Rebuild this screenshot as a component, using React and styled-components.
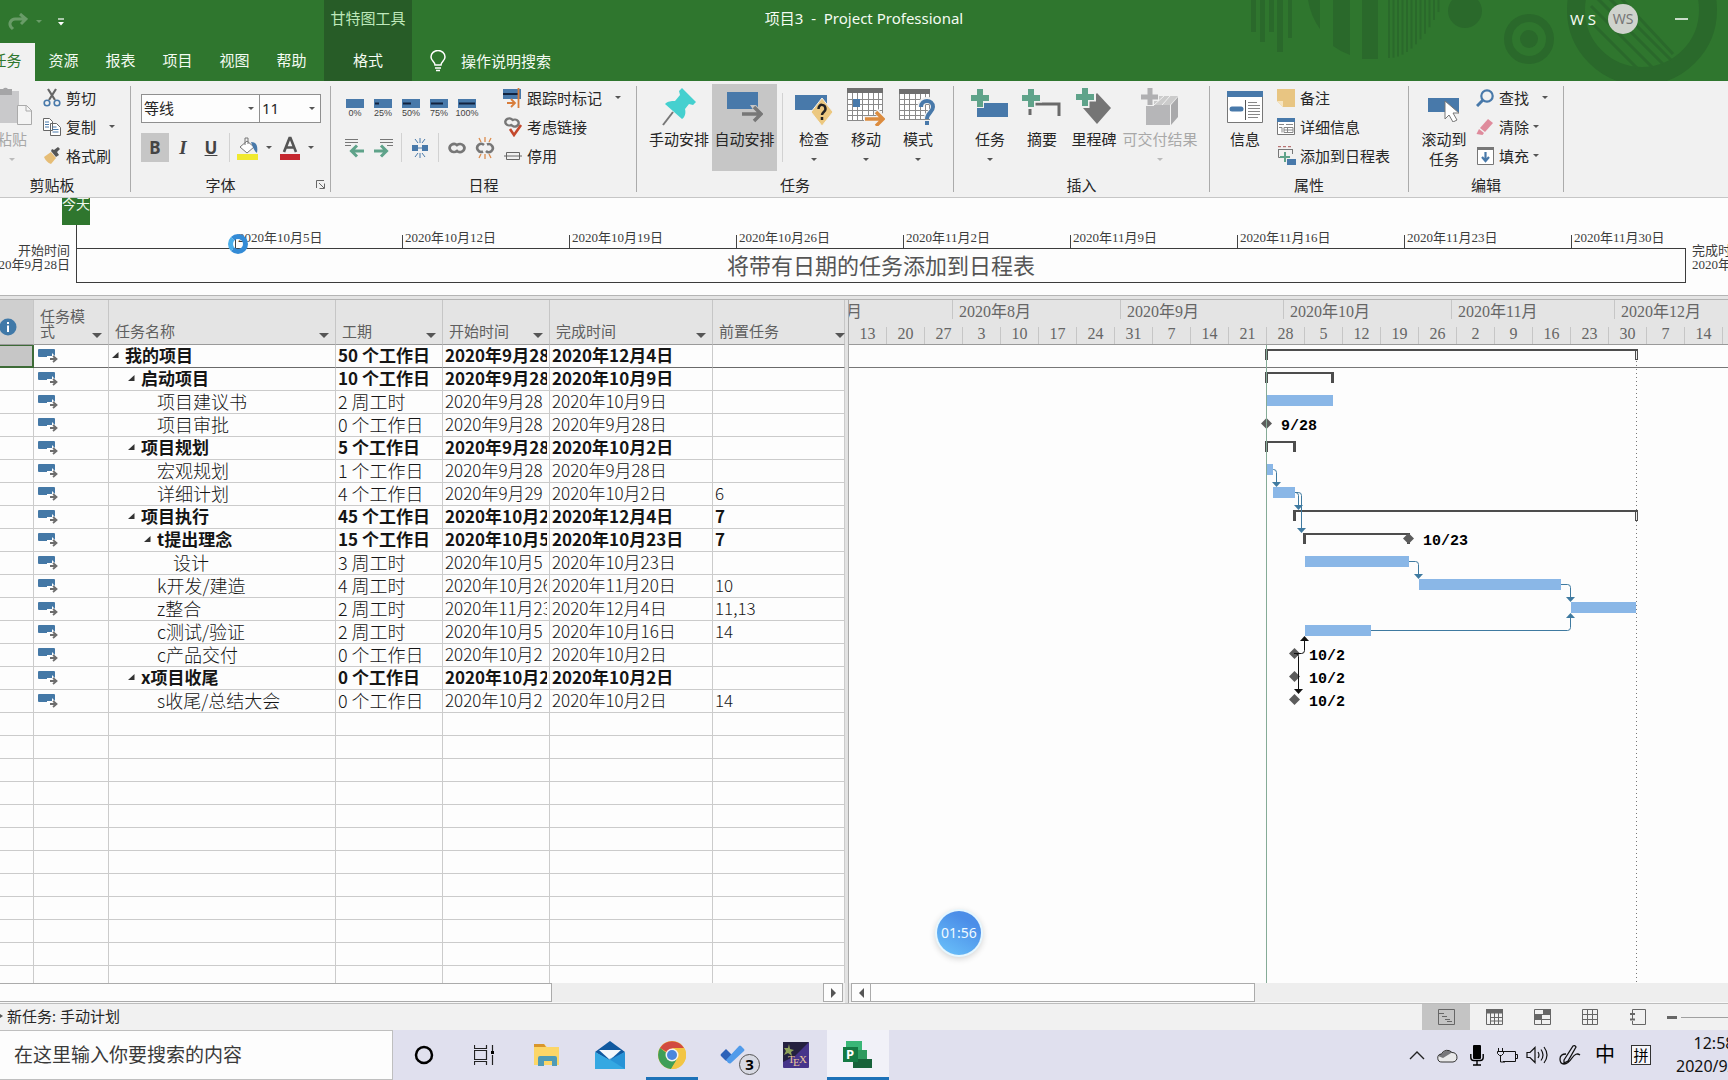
import React from "react";
import styled, { createGlobalStyle, css } from "styled-components";

const UI = `"Noto Sans", "Noto Sans CJK SC", sans-serif`;
const GRID = `"Noto Sans CJK SC", sans-serif`;
const SONG = `"Liberation Serif", "Noto Sans CJK SC", serif`;

const c = {
  green: "#2f762e",
  greenDark: "#275c27",
  pattern: "#2a692b",
  ribbon: "#f1f1f1",
  line: "#c6c6c6",
  head: "#e4e4e4",
  blue: "#4879aa",
  bar: "#8ab7e7",
  teal: "#5fa38a",
};

const GlobalStyle = createGlobalStyle`
  * { box-sizing: border-box; }
  html, body { margin: 0; height: 100%; overflow: hidden; }
  body { font-family: ${UI}; font-size: 15px; color: #262626; background: #fdfdfd; }
  button, input, select { font: inherit; color: inherit; margin: 0; padding: 0; border: 0; background: none; border-radius: 0; }
  svg { display: block; flex: none; }
`;

const Shell = styled.div`
  height: 100vh;
  display: flex;
  flex-direction: column;
  overflow: hidden;
  position: relative;
`;

/* ---------- title bar and tabs ---------- */
const Header = styled.header`
  position: relative;
  flex: none;
  background: ${c.green};
  color: #f4fbf2;
`;
const Pattern = styled.svg`
  position: absolute;
  right: 0;
  top: 0;
`;
const TitleRow = styled.div`
  position: relative;
  display: grid;
  grid-template-columns: 1fr auto 1fr;
  height: 43px;
`;
const TitleLeft = styled.div`
  display: flex;
`;
const QuickAccess = styled.div`
  width: 324px;
  display: flex;
  align-items: center;
  gap: 8px;
  padding-left: 8px;
`;
const QuickButton = styled.button`
  display: flex;
  opacity: ${(p) => (p.$dim ? 0.28 : 1)};
  margin-left: ${(p) => p.$gap || 0}px;
`;
const ContextLabel = styled.div`
  width: 88px;
  height: 43px;
  line-height: 36px;
  text-align: center;
  background: ${c.greenDark};
  color: #bfe8bb;
`;
const Title = styled.h1`
  margin: 0;
  font-size: 15px;
  font-weight: 400;
  line-height: 36px;
  white-space: pre;
`;
const Account = styled.div`
  display: flex;
  justify-content: flex-end;
  align-items: center;
  height: 38px;
  padding-right: 40px;
`;
const Avatar = styled.span`
  width: 30px;
  height: 30px;
  margin: 0 37px 0 12px;
  border-radius: 50%;
  background: #cfd3cd;
  color: #777;
  font-size: 14px;
  line-height: 30px;
  text-align: center;
`;
const Tabs = styled.nav`
  position: relative;
  display: flex;
  height: 38px;
  margin-left: -22px;
`;
const Tab = styled.button`
  width: 57px;
  padding-bottom: 5px;
  ${(p) => p.$active && css`background: ${c.ribbon}; color: ${c.green};`}
`;
const FormatTab = styled(Tab)`
  width: 88px;
  margin-left: 4px;
  background: ${c.greenDark};
`;
const TellMe = styled.button`
  display: flex;
  align-items: center;
  gap: 15px;
  margin-left: 18px;
  padding-bottom: 3px;
`;

/* ---------- ribbon ---------- */
const Ribbon = styled.section`
  flex: none;
  display: flex;
  height: 117px;
  background: ${c.ribbon};
  border-bottom: 1px solid ${c.line};
`;
const Group = styled.div`
  width: ${(p) => p.$w}px;
  flex: none;
  display: flex;
  flex-direction: column;
  padding-top: 3px;
  &:first-child { margin-left: -26px; }
`;
const GroupBody = styled.div`
  display: flex;
  height: 87px;
  padding-left: ${(p) => p.$pad || 10}px;
`;
const GroupFoot = styled.div`
  display: flex;
  height: 26px;
  line-height: 28px;
`;
const GroupName = styled.span`
  flex: 1;
  text-align: center;
`;
const Launcher = styled.button`
  width: 20px;
  display: flex;
  align-items: center;
  padding-left: 6px;
`;
const Rule = styled.span`
  flex: none;
  width: 1px;
  margin: ${(p) => p.$m || "5px 0"};
  background: ${(p) => (p.$soft ? "#d2d2d2" : "#ababab")};
`;
const Big = styled.button`
  width: ${(p) => p.$w}px;
  height: 87px;
  flex: none;
  display: flex;
  flex-direction: column;
  align-items: center;
  line-height: 20px;
  white-space: nowrap;
  background: ${(p) => (p.$on ? "#c6c6c6" : "transparent")};
  color: ${(p) => (p.$off ? "#a8a8a8" : "inherit")};
`;
const BigIcon = styled.span`
  height: 45px;
  display: flex;
  align-items: center;
`;
const CaretSlot = styled.span`
  height: 20px;
  display: flex;
  align-items: center;
`;
const SmallCol = styled.div`
  display: flex;
  flex-direction: column;
`;
const Small = styled.button`
  height: 29px;
  display: flex;
  align-items: center;
  gap: 3px;
  padding: 0 5px 2px;
  white-space: nowrap;
`;
const IconBox = styled.span`
  width: 22px;
  display: flex;
  justify-content: center;
`;
const SmallCaret = styled.span`
  display: flex;
  margin-left: ${(p) => (p.$near ? 1 : 10)}px;
`;
const Tools = styled.div`
  display: flex;
  flex-direction: column;
  gap: 10px;
  padding-top: 10px;
  width: ${(p) => p.$w}px;
`;
const ToolRow = styled.div`
  display: flex;
  height: 29px;
`;
const Combo = styled.label`
  position: relative;
  width: ${(p) => p.$w}px;
  height: 29px;
  border: 1px solid #8f8f8f;
  background: #fdfdfd;
  & + & { margin-left: -1px; }
  select { width: 100%; height: 100%; padding: 0 0 2px 2px; appearance: none; outline: 0; }
  svg { position: absolute; right: 5px; top: 12px; pointer-events: none; }
`;
const Tool = styled.button`
  width: 28px;
  height: 29px;
  flex: none;
  display: flex;
  flex-direction: column;
  align-items: center;
  justify-content: center;
  color: #444;
  font-size: ${(p) => (p.$pct ? 9 : 17)}px;
  font-family: ${(p) => (p.$pct ? `"Liberation Sans", sans-serif` : "inherit")};
  line-height: ${(p) => (p.$pct ? 10 : 20)}px;
  background: ${(p) => (p.$on ? "#c6c6c6" : "transparent")};
  i { font-family: "Liberation Serif", serif; font-size: 19px; }
`;
const ToolCaret = styled.button`
  width: 14px;
  display: flex;
  align-items: center;
  justify-content: center;
`;

/* ---------- timeline ---------- */
const Timeline = styled.section`
  position: relative;
  flex: none;
  display: flex;
  height: 97px;
  background: #fdfdfd;
  font: 13px/14px ${SONG};
  color: #3c3c3c;
`;
const TimelineEnd = styled.div`
  flex: none;
  width: ${(p) => p.$w}px;
  padding: 46px 6px 0;
  display: flex;
  flex-direction: column;
  align-items: ${(p) => (p.$start ? "flex-end" : "flex-start")};
  overflow: hidden;
  white-space: nowrap;
`;
const TimelineMain = styled.div`
  flex: 1;
`;
const Ticks = styled.div`
  display: grid;
  grid-template-columns: 159fr repeat(8, 167fr) 115fr;
  height: 50px;
  padding-top: 32px;
`;
const Tick = styled.span`
  position: relative;
  padding-left: 3px;
  line-height: 15px;
  white-space: nowrap;
  &:not(:first-child)::before {
    content: "";
    position: absolute;
    left: 0;
    bottom: 0;
    width: 1px;
    height: 13px;
    background: #444;
  }
`;
const Track = styled.div`
  height: 35px;
  border: 1px solid #3c3c3c;
  text-align: center;
  font: 22px/31px ${GRID};
  color: #555;
`;
const Today = styled.div`
  position: absolute;
  left: 62px;
  top: 0;
  width: 28px;
  height: 27px;
  background: ${c.green};
  color: #eef8ec;
  font: 14px/11px ${GRID};
  &::after {
    content: "";
    position: absolute;
    left: 14px;
    top: 27px;
    width: 1px;
    height: 23px;
    background: #3c3c3c;
  }
`;
const Busy = styled.div`
  position: absolute;
  left: 228px;
  top: 36px;
  width: 20px;
  height: 20px;
  border-radius: 50%;
  border: 5px solid #338bd6;
  border-left-color: #4aaeea;
`;
const HSplit = styled.div`
  flex: none;
  height: 5px;
  background: ${c.head};
  border: solid #b4b4b4;
  border-width: 1px 0;
`;

/* ---------- panes ---------- */
const Panes = styled.main`
  flex: 1;
  min-height: 0;
  display: grid;
  grid-template-columns: 845px 4px 1fr;
  grid-template-rows: 100%;
  border-bottom: 1px solid #bdbdbd;
`;
const Pane = styled.section`
  min-width: 0;
  display: flex;
  flex-direction: column;
`;
const Clip = styled.div`
  flex: 1;
  min-height: 0;
  overflow: hidden;
`;
const VSplit = styled.div`
  background: #e2e2e2;
  border-right: 1px solid #aaa;
`;
const Sheet = styled.table`
  width: 845px;
  table-layout: fixed;
  border-collapse: separate;
  border-spacing: 0;
  font: 17px/20px ${GRID};
  color: #1d1d1d;
`;
const Th = styled.th`
  height: 45px;
  padding: 0 6px 6px;
  vertical-align: bottom;
  text-align: left;
  font: 15px/15px ${GRID};
  color: #5f5f5f;
  background: ${(p) => (p.$corner ? "#cfcfcf" : c.head)};
  border-right: 1px solid ${c.line};
  border-bottom: 1px solid #9a9a9a;
`;
const ThBody = styled.div`
  display: flex;
  align-items: flex-end;
  justify-content: space-between;
  margin-right: ${(p) => (p.$edge ? -7 : 0)}px;
`;
const Row = styled.tr`
  color: #151515;
  font-weight: ${(p) => (p.$bold ? 700 : 300)};
  td { border-bottom-color: ${(p) => (p.$selected ? "#6a6a6a" : "#cbcbcb")}; }
  td:first-child {
    ${(p) => p.$selected && css`
      background: #c6c6c6;
      border-color: #3d6b37;
      box-shadow: inset -1px -1px #3d6b37, inset 0 1px #3d6b37;
    `}
  }
`;
const Td = styled.td`
  height: 23px;
  padding: 0 2px 2px;
  overflow: hidden;
  white-space: nowrap;
  font-size: ${(p) => (p.$wide ? 18 : 17)}px;
  border-right: 1px solid #cbcbcb;
  border-bottom: 1px solid #cbcbcb;
`;
const ModeCell = styled.div`
  padding: 1px 0 0 2px;
`;
const NameCell = styled.div`
  display: flex;
  align-items: center;
  height: 20px;
  padding-left: ${(p) => 1 + 16 * (p.$level - 1)}px;
`;
const Fold = styled.span`
  width: 13px;
  flex: none;
`;
const Clipped = styled.div`
  height: 20px;
  overflow: hidden;
`;
const InfoMark = styled.span`
  margin: 0 0 2px -7px;
`;
const ScrollBar = styled.div`
  flex: none;
  display: flex;
  justify-content: ${(p) => (p.$right ? "flex-start" : "space-between")};
  height: 20px;
  padding: 0 2px;
  background: #eee;
  border-bottom: 1px solid #f8f8f8;
`;
const Thumb = styled.div`
  width: ${(p) => p.$w};
  margin-left: ${(p) => (p.$flush ? -3 : -1)}px;
  background: #fdfdfd;
  border: 1px solid #ababab;
`;
const Arrow = styled.button`
  width: 20px;
  display: flex;
  align-items: center;
  justify-content: center;
  background: #fdfdfd;
  border: 1px solid #ababab;
`;
const Scale = styled.div`
  flex: none;
  height: 45px;
  overflow: hidden;
  background: ${c.head};
  border-bottom: 1px solid #9a9a9a;
  font: 16px/18px ${SONG};
  color: #666;
`;
const ScaleRow = styled.div`
  display: flex;
  height: ${(p) => p.$h}px;
  margin-bottom: ${(p) => (p.$gap ? 8 : 0)}px;
`;
const Month = styled.span`
  flex: none;
  width: ${(p) => p.$w}px;
  padding-left: 6px;
  line-height: 23px;
  white-space: nowrap;
  border-right: 1px solid ${c.line};
  &:first-child { text-indent: -9px; }
`;
const Week = styled.span`
  flex: none;
  width: 38px;
  line-height: 13px;
  text-align: center;
  border-right: 1px solid ${c.line};
`;
const Chart = styled.svg`
  width: 100%;
  height: 100%;
  background: #fdfdfd;
  font: bold 15px "Liberation Mono", monospace;
`;
const Timer = styled.div`
  position: absolute;
  left: 937px;
  bottom: 125px;
  width: 44px;
  height: 44px;
  border-radius: 50%;
  background: linear-gradient(30deg, #6cc4fb, #4b8ee8 75%);
  box-shadow: 0 0 0 2px #e6f7ff, 0 2px 6px 2px rgba(0, 0, 0, 0.16);
  color: #f0faff;
  font-size: 14px;
  line-height: 44px;
  text-align: center;
`;

/* ---------- status bar ---------- */
const Status = styled.footer`
  flex: none;
  display: flex;
  height: 26px;
  overflow: hidden;
  background: ${c.ribbon};
  line-height: 23px;
`;
const StatusText = styled.span`
  flex: 1;
  display: flex;
  align-items: center;
  gap: 3px;
  padding-bottom: 2px;
`;
const ViewButton = styled.button`
  width: 48px;
  display: flex;
  align-items: center;
  justify-content: center;
  background: ${(p) => (p.$on ? "#c4c4c4" : "transparent")};
`;
const ZoomBox = styled.div`
  width: 66px;
  flex: none;
  display: flex;
  align-items: center;
  gap: 4px;
  padding-left: 5px;
  overflow: hidden;
  input {
    appearance: none;
    flex: none;
    width: 140px;
    height: 1px;
    background: #a0a0a0;
    &::-webkit-slider-thumb { appearance: none; width: 6px; height: 14px; background: #666; }
  }
`;

/* ---------- taskbar ---------- */
const Taskbar = styled.footer`
  flex: none;
  display: flex;
  height: 50px;
  overflow: hidden;
  background: #e0e0ee;
`;
const Search = styled.input`
  width: 393px;
  padding-left: 14px;
  font-size: 19px;
  background: #fdfdfd;
  border: solid #bfbfbf;
  border-width: 1px 1px 1px 0;
  &::placeholder { color: #3a3a3a; opacity: 1; }
`;
const TaskButton = styled.button`
  position: relative;
  width: 62px;
  display: flex;
  align-items: center;
  justify-content: center;
  background: ${(p) => (p.$on ? "#f1f1f8" : "transparent")};
  &::after {
    content: "";
    position: absolute;
    left: ${(p) => (p.$on ? 0 : 5)}px;
    right: ${(p) => (p.$on ? 0 : 5)}px;
    bottom: 0;
    height: 3px;
    background: ${(p) => (p.$run || p.$on ? "#1d72b8" : "transparent")};
  }
`;
const Badge = styled.span`
  position: absolute;
  left: 36px;
  top: 24px;
  width: 21px;
  height: 21px;
  border: 1px solid #555;
  border-radius: 50%;
  background: #d7d9e2;
  color: #000;
  font-size: 15px;
  font-weight: 700;
  line-height: 18px;
`;
const Tray = styled.div`
  flex: 1;
  display: flex;
  align-items: center;
  justify-content: flex-end;
`;
const TrayButton = styled.button`
  width: ${(p) => p.$w || 30}px;
  display: flex;
  align-items: center;
  justify-content: center;
  color: #000;
  font-size: 20px;
  line-height: 24px;
`;
const Ime = styled.span`
  width: 20px;
  height: 20px;
  border: 1px solid #333;
  background: #f6f6fa;
  font-size: 15px;
  line-height: 18px;
  text-align: center;
`;
const Clock = styled.div`
  flex: none;
  width: 76px;
  margin: 0 -24px 0 16px;
  font-size: 16px;
  line-height: 23px;
  text-align: center;
  color: #111;
`;

/* ---------- icons ---------- */
const Caret = ({ color = "#555", w = 8 }) => (
  <svg width={w} height={w / 2} viewBox="0 0 8 4"><path d="M0 0h8L4 4z" fill={color} /></svg>
);
const S = ({ w, h, children }) => (
  <svg width={w} height={h} viewBox={`0 0 ${w} ${h}`} fill="none">{children}</svg>
);
const Calendar = ({ w, h, top, cols, rows }) => (
  <g stroke="#8a8a8a">
    <rect x=".5" y=".5" width={w - 1} height={h - 1} fill="#fff" />
    {Array.from({ length: cols - 1 }, (_, i) => <path key={"c" + i} d={`M${Math.round(((i + 1) * w) / cols) + 0.5} ${top}V${h}`} />)}
    {Array.from({ length: rows - 1 }, (_, i) => <path key={"r" + i} d={`M0 ${top + Math.round(((i + 1) * (h - top)) / rows) + 0.5}H${w}`} />)}
    <path d={`M0 0h${w}v${top}H0z`} fill="#6f6f6f" stroke="none" />
  </g>
);
const I = {
  redo: <S w={20} h={18}><path d="M17 6H7a5 5 0 0 0-4 8l2 2M12 1l6 5-5 5" stroke="#fff" strokeWidth="3" /></S>,
  more: <S w={6} h={8}><path d="M0 1h6" stroke="#fff" strokeWidth="1.2" /><path d="M0 4h6L3 7.500z" fill="#fff" /></S>,
  bulb: <S w={16} h={22}><path d="M5 15c0-3-4-4-4-8a7 6.500 0 0 1 14 0c0 4-4 5-4 8zM5 18h6M6 20.500h4" stroke="#fff" strokeWidth="1.500" /></S>,
  paste: <S w={44} h={40}><path d="M1 4h28v32H1z" fill="#c9c9cb" /><path d="M9 2h4a3 3 0 0 1 5 0h4v6H9z" fill="#a5a5a7" /><path d="M27.500 18.500h9l5 5v14h-14z" fill="#f4f4f4" stroke="#aaa" /><path d="M36 18v6h6" stroke="#aaa" /></S>,
  cut: <S w={18} h={19}><path d="M5 1l7 11M13 1L6 12" stroke="#666" strokeWidth="2.200" /><circle cx="4" cy="15" r="2.800" stroke={c.blue} strokeWidth="1.600" /><circle cx="14" cy="15" r="2.800" stroke={c.blue} strokeWidth="1.600" /></S>,
  copy: <S w={18} h={18}><path d="M.5.5h6l3 3v9h-9zM7.500 5.500h6l4 4v8h-10z" fill="#fff" stroke="#666" /><path d="M2 4h4M2 6.500h4M2 9h4M9.500 9h4M9.500 11.500h6M9.500 14h6" stroke={c.blue} /></S>,
  brush: <S w={18} h={18}><path d="M1 10l7-5 5 6-5 6c-3-1-6-4-7-7z" fill="#e6bd76" /><path d="M8 4l5 6 3-2-2-3 3-3-2-2-4 3-2-1z" fill="#555" /></S>,
  bucket: <S w={22} h={24}><path d="M10 5l7 6-7 6-7-6z" fill="#fff" stroke="#777" /><path d="M8 9V2h3v6" stroke="#777" /><path d="M14 6c6 0 7 5 6 11-3-2-4-6-6-11z" fill={c.blue} /><path d="M0 18h21v6H0z" fill="#f0e92f" /></S>,
  fontA: <S w={20} h={24}><path d="M4 16L9.500 2h1L16 16M6 11.500h8" stroke="#555" strokeWidth="2.600" /><path d="M0 18h20v6H0z" fill="#c5272f" /></S>,
  launcher: <S w={9} h={9}><path d="M.5 8V.5H8M3 3l5 5M8.500 3.500v5h-5" stroke="#666" /></S>,
  outdent: <S w={20} h={20}><path d="M0 1.500h13M0 4.500h13M0 7.500h6" stroke="#777" /><path d="M19 13H7M12 7.500L6.500 13l5.500 5.500" stroke={c.teal} strokeWidth="3" /></S>,
  indent: <S w={20} h={20}><path d="M7 1.500h13M7 4.500h13M14 7.500h6" stroke="#777" /><path d="M1 13h12M8 7.500l5.500 5.500L8 18.500" stroke={c.teal} strokeWidth="3" /></S>,
  split: <S w={18} h={20}><path d="M1 7h6v6H1zM11 7h6v6h-6z" fill={c.blue} /><path d="M9 0v5M9 15v5M4 1l3 4M14 1l-3 4M4 19l3-4M14 19l-3-4M7 10h4" stroke={c.blue} /></S>,
  link: <S w={20} h={14}><path d="M10 10a4.500 4 0 1 1 1-5M10 4a4.500 4 0 1 1-1 5" stroke="#777" strokeWidth="2.800" /></S>,
  unlink: <S w={20} h={22}><path d="M8 14.500a4 4 0 1 1 1-6.500M12 7.500a4 4 0 1 1-1 6.500" stroke="#777" strokeWidth="2.600" /><path d="M10 0v5M10 17v5M4 1l2 4M16 1l-2 4M4 21l2-4M16 21l-2-4" stroke="#dd8c4d" strokeWidth="1.300" /></S>,
  mark: <S w={20} h={20}><path d="M0 1h18v10H0z" fill={c.blue} /><path d="M0 6h15" stroke="#12233f" strokeWidth="2" /><path d="M15.500 0v20M4 15h8M8 11l4 4-4 4" stroke="#d87d3b" strokeWidth="1.800" /></S>,
  respect: <S w={20} h={20}><path d="M9 7.500a4 3.500 0 1 1 1-4M9 3.500a4 3.500 0 1 1-1 4" stroke="#777" strokeWidth="2.400" /><path d="M7 12l4 6 7-10" stroke="#c4482c" strokeWidth="2.600" /></S>,
  inactive: <S w={18} h={10}><path d="M2.500 1.500h13v7h-13zM0 5h18" stroke="#666" /></S>,
  pin: <S w={36} h={38}><path d="M12 24L2 37" stroke="#777" strokeWidth="2" /><path d="M21 0l14 14-3 3-4-1-4 5c1 4 0 8-3 10L4 16c3-3 6-3 10-3l5-6-1-4z" fill="#45d0cf" /></S>,
  auto: <S w={36} h={32}><path d="M0 1h31v17H0z" fill={c.blue} /><path d="M13 20h14l-4-6h6l8 9-7 9h-6l4-6H13z" fill="#c6c6c6" /><path d="M15 23h18M27 16l7 7-7 7" stroke="#777" strokeWidth="3.500" /></S>,
  check: <S w={38} h={38}><path d="M0 7h32v15H0z" fill={c.blue} /><path d="M27 10l11 14-11 14-11-14z" fill="#ecc880" stroke="#f1f1f1" /><path d="M23.500 21c0-6 7-5 7 0 0 3-3.500 3-3.500 6M27 29v3" stroke="#222" strokeWidth="2.500" /></S>,
  move: <S w={38} h={38}><Calendar w={36} h={33} top={5} cols={7} rows={5} /><path d="M6 11h7v8H6z" fill={c.blue} /><path d="M17 31h18M29 23l8 8-8 8" stroke="#f1f1f1" strokeWidth="6" /><path d="M18 31h17M29 24l7 7-7 7" stroke="#dc8c3f" strokeWidth="3.500" /></S>,
  mode: <S w={38} h={36}><Calendar w={31} h={31} top={5} cols={6} rows={5} /><path d="M22 18c0-9 13-9 13 0 0 6-7 6-7 12M28 32v4" stroke="#f1f1f1" strokeWidth="7" /><path d="M22 18c0-8 12-8 12 0 0 5-6 6-6 12M28 32v4" stroke={c.blue} strokeWidth="4" /></S>,
  task: <S w={38} h={36}><path d="M6 14h31v14H6z" fill={c.blue} /><path d="M9 0v19M0 9h19" stroke="#f1f1f1" strokeWidth="8" /><path d="M9 0v18M0 9h18" stroke={c.teal} strokeWidth="6" /></S>,
  summary: <S w={40} h={36}><path d="M8 26V15h29v12" stroke="#6a6a6a" strokeWidth="3" /><path d="M9 0v20M0 9h20" stroke="#f1f1f1" strokeWidth="9" /><path d="M9 0v18M0 9h18" stroke={c.teal} strokeWidth="6" /></S>,
  milestone: <S w={36} h={38}><path d="M21 5l14 15-14 16L7 20z" fill="#757575" /><path d="M9 0v20M0 9h20" stroke="#f1f1f1" strokeWidth="9" /><path d="M9 0v18M0 9h18" stroke={c.teal} strokeWidth="6" /></S>,
  deliver: <S w={38} h={38}><path d="M5 17l9-9h23l-8 9z" fill="#cbcbcb" /><path d="M5 17h24v20H5z" fill="#b6b6b8" /><path d="M30 17l7-8v20l-7 8z" fill="#a9a9ab" /><path d="M13 17l10-9M21 17l8-9" stroke="#f1f1f1" /><path d="M9 0v18M0 9h18" stroke="#f1f1f1" strokeWidth="8" /><path d="M9 0v17M0 9h17" stroke="#b0b0b2" strokeWidth="5" /></S>,
  info: <S w={36} h={32}><path d="M.5.5h35v31H.5z" fill="#fff" stroke="#777" /><path d="M0 0h36v6H0z" fill={c.blue} /><path d="M5 18h9" stroke={c.blue} strokeWidth="5" strokeLinecap="round" /><path d="M18.500 9v20" stroke="#555" /><path d="M21 11.500h9M21 14.500h12M21 17.500h12M21 20.500h12M21 23.500h12M21 26.500h10" stroke="#888" /></S>,
  note: <S w={18} h={18}><path d="M0 0h18v18H6l-6-6z" fill="#e8c582" /><path d="M0 12h6v6z" fill="#f6e5c2" /></S>,
  detail: <S w={18} h={17}><path d="M.5.5h17v16H.5z" fill="#fff" stroke="#777" /><path d="M0 0h18v4H0z" fill={c.blue} /><path d="M2 6.500h5M9 6.500h7M2 9.500h3v5M7 9.500h9v5H7zM10.500 9v6M7 12h9" stroke="#888" /></S>,
  addTl: <S w={19} h={19}><path d="M1.500 3v8.500H5M15.500 3v5M1 3.500h15" stroke="#777" /><path d="M1 .7h3M6 .7h3M11 .7h3" stroke="#a55" /><path d="M8 6v10M3 11h10" stroke={c.teal} strokeWidth="2" /><path d="M10 13h9v6h-9z" fill={c.blue} /></S>,
  scrollTo: <S w={34} h={30}><path d="M1 6h31v14H1z" fill={c.blue} /><path d="M18 9v18l4-4 4 7 4-2-4-7h6z" fill="#fff" stroke="#777" /></S>,
  find: <S w={18} h={18}><circle cx="11" cy="7" r="5.700" stroke={c.blue} strokeWidth="2.200" /><path d="M7 11l-6 6" stroke={c.blue} strokeWidth="3" /></S>,
  erase: <S w={18} h={16}><path d="M12 0l5 4-8 9-5-4z" fill="#df8b9c" /><path d="M3 10l5 4-1.500 2-6-1z" fill="#df8b9c" /></S>,
  fill: <S w={17} h={18}><path d="M.5.5h16v17H.5z" fill="#fff" stroke="#777" /><path d="M0 0h17v3H0z" fill="#777" /><path d="M8.500 5v8M5 10l3.500 4 3.500-4" stroke={c.blue} strokeWidth="2.200" /></S>,
  row: <S w={20} h={14}><path d="M1 0h15q1 0 1 1v7H1q-1 0-1-1V1q0-1 1-1z" fill="#4478a6" /><path d="M9 7h5V4l6 6-5 4v-3H9z" fill="#fff" /><path d="M12 10h6M15 7l3.500 3L15 13" stroke="#6d6d6d" strokeWidth="1.800" /></S>,
  fold: <S w={7} h={6}><path d="M6.500 0v6H0z" fill="#333" /></S>,
  i: <S w={18} h={18}><circle cx="9" cy="9" r="8.500" fill="#4079a8" /><path d="M9 7.500V14M9 4v2" stroke="#fff" strokeWidth="2" /></S>,
  left: <S w={5} h={10}><path d="M5 0v10L0 5z" fill="#555" /></S>,
  right: <S w={5} h={10}><path d="M0 0v10l5-5z" fill="#555" /></S>,
  vGantt: <S w={17} h={16}><path d="M.5.5h16v15H.5zM0 4.500h6M4 7.500h5M7 10.500h5M9 12.500h5" stroke="#666" /></S>,
  vUsage: <S w={17} h={16}><path d="M.5.5h16v15H.5zM4.500 4v12M8.500 4v12M12.500 4v12M4 8.500h12M4 12h12" stroke="#666" /><path d="M0 0h17v4.500H0z" fill="#666" /></S>,
  vTeam: <S w={17} h={16}><path d="M.5.5h16v15H.5zM0 5.500h17M0 10.500h17M7.500 10v6" stroke="#666" /><path d="M9 0h8v5H9zM0 5h8v5H0z" fill="#666" /></S>,
  vSheet: <S w={16} h={16}><path d="M.5.5h15v15H.5zM5.500 0v16M10.500 0v16M0 5.500h16M0 10.500h16" stroke="#666" /></S>,
  vReport: <S w={16} h={16}><path d="M2.500 4V.5h13v15h-13V12M2.500 6v4" stroke="#666" /><path d="M0 5h5M0 10.500h5" stroke="#666" strokeWidth="2" /></S>,
  cortana: <S w={20} h={20}><circle cx="10" cy="10" r="8" stroke="#000" strokeWidth="2.500" /></S>,
  taskview: <S w={24} h={20}><path d="M.5 0v3.500h12V0M.5 20v-3.500h12V20M.5 5.500h12v9H.5zM18.500 0v6M18.500 10v10" stroke="#222" strokeWidth="1.200" /><path d="M17 6h3v3h-3z" fill="#000" /></S>,
  explorer: <S w={28} h={25}><path d="M0 1h10l3 3h12v18H0z" fill="#fcd667" /><path d="M0 1h10l2 3H0z" fill="#d9962c" /><path d="M4 23v-8q0-2 2-2h15q2 0 2 2v8h-5v-5h-8v5z" fill="#4f9bb6" /></S>,
  mail: <S w={30} h={28}><path d="M0 11L15 0l15 11-15 9z" fill="#11599f" /><path d="M4 9h22l-11 10z" fill="#f4f7fb" /><path d="M0 11l15 8 15-8v17H0z" fill="#35a8e2" /><path d="M30 11v17L14 18z" fill="#1f86cf" opacity=".6" /></S>,
  chrome: <S w={28} h={28}><circle cx="14" cy="14" r="14" fill="#f2c544" /><path d="M14 14L2 7a14 14 0 0 1 24 0z" fill="#d24b41" /><path d="M2 7a14 14 0 0 0 11 21l6-10-5-2z" fill="#3f9e57" /><path d="M14 7h12.200a14 14 0 0 1-13 21l7-11z" fill="#f2c544" /><circle cx="14" cy="14" r="6.500" fill="#f3f3f3" /><circle cx="14" cy="14" r="5" fill="#4a86dd" /></S>,
  todo: <S w={30} h={26}><path d="M2 12l5-5 6 6-5 6q-1 0-2-1l-4-4q-1-1 0-2z" fill="#2d62b8" /><path d="M7 18L20 4q1-1 2 0l3 3q1 1 0 2L12 21q-2 2-5-3z" fill="#519bea" /></S>,
  chevron: <S w={16} h={10}><path d="M1 9l7-7 7 7" stroke="#222" strokeWidth="1.400" /></S>,
  cloud: <S w={21} h={15}><path d="M5 14a4 4 0 0 1-.5-8A6 5.500 0 0 1 15 4.500a5 4.800 0 0 1 1 9.500z" fill="#e9e9ea" /><path d="M1 8q2-3 4-2A6 5.500 0 0 1 15 4.500L6 10z" fill="#77777b" /><path d="M5 14a4 4 0 0 1-.5-8A6 5.500 0 0 1 15 4.500a5 4.800 0 0 1 1 9.500z" stroke="#333" /></S>,
  mic: <S w={14} h={21}><rect x="3" y="0" width="8" height="14" rx="1" fill="#000" /><path d="M.8 9v3.500q0 3 3 3h6.400q3 0 3-3V9M7 15v5M3 20h8" stroke="#000" strokeWidth="1.400" /></S>,
  battery: <S w={21} h={16}><path d="M6 4.500h12.500v10H6M19 7.500h1.500v4H19M1.500 1v3M5.500 1v3M.5 4.500h6v2l-2 2h-2l-2-2zM3.500 8v7H8" stroke="#111" /></S>,
  sound: <S w={22} h={18}><path d="M1 6.500h3l5-5v15l-5-5H1zM12 6q2 3 0 6M15 3.500q4 5.500 0 11M18 1q6 8 0 16" stroke="#111" strokeWidth="1.200" /></S>,
  pen: <S w={22} h={20}><path d="M5 15L14 1q2-1 3 1L9 16l-4 2zM7 9q-6 0-6 5t4 5 8-6 8-3" stroke="#111" strokeWidth="1.300" /></S>,
};

const letter = { fontSize: 11, fontFamily: "Liberation Serif", fill: "#e9c59a" };
const TexIcon = () => (
  <S w={26} h={26}>
    <rect width="26" height="26" rx="1" fill="#46348a" />
    <path d="M0 0h26L12 14 0 20z" fill="#24203f" />
    <path d="M6 2l1 5 4 1-3 2 1 4-4-3-4 2 2-4-2-3 4 0z" fill="#8fa35a" />
    <text x="5" y="21" {...letter}>T</text>
    <text x="10" y="24" {...letter}>E</text>
    <text x="16" y="21" {...letter}>X</text>
  </S>
);
const ProjectIcon = () => (
  <S w={30} h={28}>
    <path d="M3 0h16v9H3z" fill="#3ab677" />
    <path d="M14 9h10v10H14z" fill="#2f9a5f" />
    <path d="M10 18h19v9H10z" fill="#17623a" />
    <path d="M3 9h12v11H3z" fill="#1f8a52" />
    <path d="M0 6h15v15H0z" fill="#147943" />
    <text x="3" y="18" fontSize="13" fontWeight="700" fill="#fff">P</text>
  </S>
);

/* ---------- data ---------- */
const cols = [34, 75, 227, 107, 107, 163, 132];
const tasks = [
  [1, "我的项目", "50 个工作日", "2020年9月28", "2020年12月4日", "", true],
  [2, "启动项目", "10 个工作日", "2020年9月28", "2020年10月9日", "", true],
  [3, "项目建议书", "2 周工时", "2020年9月28", "2020年10月9日", ""],
  [3, "项目审批", "0 个工作日", "2020年9月28", "2020年9月28日", ""],
  [2, "项目规划", "5 个工作日", "2020年9月28", "2020年10月2日", "", true],
  [3, "宏观规划", "1 个工作日", "2020年9月28", "2020年9月28日", ""],
  [3, "详细计划", "4 个工作日", "2020年9月29", "2020年10月2日", "6"],
  [2, "项目执行", "45 个工作日", "2020年10月2", "2020年12月4日", "7", true],
  [3, "t提出理念", "15 个工作日", "2020年10月5", "2020年10月23日", "7", true],
  [4, "设计", "3 周工时", "2020年10月5", "2020年10月23日", ""],
  [3, "k开发/建造", "4 周工时", "2020年10月26", "2020年11月20日", "10"],
  [3, "z整合", "2 周工时", "2020年11月23", "2020年12月4日", "11,13"],
  [3, "c测试/验证", "2 周工时", "2020年10月5", "2020年10月16日", "14"],
  [3, "c产品交付", "0 个工作日", "2020年10月2", "2020年10月2日", ""],
  [2, "x项目收尾", "0 个工作日", "2020年10月2", "2020年10月2日", "", true],
  [3, "s收尾/总结大会", "0 个工作日", "2020年10月2", "2020年10月2日", "14"],
];
const months = [["月", 104], ["2020年8月", 168], ["2020年9月", 163], ["2020年10月", 168], ["2020年11月", 163], ["2020年12月", 168]];
const weeks = [13, 20, 27, 3, 10, 17, 24, 31, 7, 14, 21, 28, 5, 12, 19, 26, 2, 9, 16, 23, 30, 7, 14];
const ROW = 23;
const summaries = [[0, 416, 789], [1, 416, 485], [4, 416, 447], [7, 444, 789], [8, 454, 561]];
const bars = [[2, 417, 484], [5, 417, 424], [6, 424, 446], [9, 456, 560], [10, 570, 712], [11, 722, 787], [12, 456, 522]];
const milestones = [[3, 417, "9/28"], [8, 559, "10/23"], [13, 445, "10/2"], [14, 445, "10/2"], [15, 445, "10/2"]];
const mid = (r) => r * ROW + 9.5;
const links = [
  [424, 5, 427.5, 6, "#3f7aa0"],
  [446, 6, 449.5, 7, "#3f7aa0"],
  [446, 6, 452.5, 8, "#3f7aa0"],
  [560, 9, 569.5, 10, "#3f7aa0"],
  [712, 10, 721.5, 11, "#3f7aa0"],
  [522, 12, 721.5, 11, "#3f7aa0"],
  [445, 13, 455.5, 12, "#111"],
  [445, 13, 449.5, 15, "#111"],
];

function Link({ x1, from, x2, to, color }) {
  const down = to > from;
  const y = mid(from);
  const tip = to * ROW + (down ? 4 : 15);
  const s = down ? 1 : -1;
  return (
    <g>
      <path d={`M${x1} ${y}H${x2 - 3}q3 0 3 ${3 * s}V${tip - 4 * s}`} fill="none" stroke={color} />
      <path d={`M${x2 - 4.5} ${tip - 5 * s}h9L${x2} ${tip}z`} fill={color} />
    </g>
  );
}

function Gantt() {
  return (
    <Chart role="img" aria-label="甘特图">
      <path d="M0 22.500H4000" stroke="#777" />
      <path d="M787.500 4V2000" stroke="#777" strokeDasharray="1 3" />
      {summaries.map(([r, a, b]) => {
        const y = r * ROW + 4;
        return (
          <g key={r} fill="#4d4d4d">
            <path d={`M${a} ${y}H${b}V${y + 11}h-3V${y + 2}H${a + 3}V${y + 11}H${a}z`} />
            {b === 789 && <path d={`M${b - 1.5} ${y + 2}v8`} stroke="#eee" />}
          </g>
        );
      })}
      {bars.map(([r, a, b]) => <rect key={r} x={a} y={r * ROW + 4} width={b - a} height="11" fill={c.bar} />)}
      {milestones.map(([r, x, t]) => (
        <g key={r}>
          <path d={`M${x + 0.5} ${mid(r) - 5.5}l5.500 5.500-5.500 5.500-5.500-5.500z`} fill="#5c5c5c" />
          <text x={x + 15} y={r * ROW + 16}>{t}</text>
        </g>
      ))}
      {links.map(([x1, from, x2, to, color], i) => <Link key={i} {...{ x1, from, x2, to, color }} />)}
      <path d="M417.500 0V2000" stroke="#86ab97" />
    </Chart>
  );
}

function BigButton({ icon, w, children, caret, on, off }) {
  return (
    <Big $w={w} $on={on} $off={off} disabled={off}>
      <BigIcon>{I[icon]}</BigIcon>
      {children}
      {caret && <CaretSlot><Caret w={6} color={off ? "#bbb" : "#555"} /></CaretSlot>}
    </Big>
  );
}
function SmallButton({ icon, children, caret }) {
  return (
    <Small>
      <IconBox>{I[icon]}</IconBox>
      <span>{children}</span>
      {caret && <SmallCaret $near={caret === "near"}><Caret w={6} /></SmallCaret>}
    </Small>
  );
}
function RibbonGroup({ w, pad, name, launcher, children }) {
  return (
    <>
      <Group $w={w}>
        <GroupBody $pad={pad}>{children}</GroupBody>
        <GroupFoot>
          <GroupName>{name}</GroupName>
          {launcher && <Launcher aria-label="字体设置">{I.launcher}</Launcher>}
        </GroupFoot>
      </Group>
      <Rule />
    </>
  );
}

const stripes = [[0, 5, 32], [9, 5, 42], [18, 5, 32], [26, 6, 52], [37, 4, 38]];

function HeaderPattern() {
  return (
    <Pattern width="478" height="81" viewBox="0 0 478 81" fill={c.pattern} aria-hidden="true">
      {stripes.map(([x, w, h]) => <rect key={x} x={x + 1} width={w} height={h} />)}
      <path d="M58 0h12v29q-9-12-12-29zM83 0h17v55q-9-3-17-9zM112 0h16v59h-16z" />
      {Array.from({ length: 12 }, (_, i) => <rect key={i} x={138 + i * 4.5} width="2" height={58 - i * i * 0.38} />)}
      <circle cx="215" cy="11" r="17" />
      <circle cx="279" cy="39" r="21" fill="none" stroke={c.pattern} strokeWidth="8" />
      <circle cx="279" cy="39" r="9" />
      <circle cx="392" cy="10" r="66" fill="none" stroke={c.pattern} strokeWidth="18" />
      <path d="M341 22l48 48M341 6l62 62M343-6l70 70M355-6l66 66M367-6l56 60" stroke={c.pattern} strokeWidth="3" />
    </Pattern>
  );
}

export default function App() {
  return (
    <Shell>
      <GlobalStyle />
      <Header>
        <HeaderPattern />
        <TitleRow>
          <TitleLeft>
            <QuickAccess>
              <QuickButton $dim aria-label="恢复">{I.redo}</QuickButton>
              <QuickButton $dim aria-label="恢复选项"><Caret w={6} color="#fff" /></QuickButton>
              <QuickButton $gap={8} aria-label="自定义快速访问工具栏">{I.more}</QuickButton>
            </QuickAccess>
            <ContextLabel>甘特图工具</ContextLabel>
          </TitleLeft>
          <Title>{"项目3  -  Project Professional"}</Title>
          <Account>
            <span>W S</span>
            <Avatar>WS</Avatar>
            <QuickButton aria-label="最小化"><S w={13} h={2}><path d="M0 1h13" stroke="#fff" strokeWidth="1.500" /></S></QuickButton>
          </Account>
        </TitleRow>
        <Tabs>
          <Tab $active>任务</Tab>
          {["资源", "报表", "项目", "视图", "帮助"].map((t) => <Tab key={t}>{t}</Tab>)}
          <FormatTab>格式</FormatTab>
          <TellMe>{I.bulb}操作说明搜索</TellMe>
        </Tabs>
      </Header>

      <Ribbon>
        <RibbonGroup w={156} pad={14} name="剪贴板">
          <BigButton icon="paste" w={48} off caret>粘贴</BigButton>
          <SmallCol>
            <SmallButton icon="cut">剪切</SmallButton>
            <SmallButton icon="copy" caret="far">复制</SmallButton>
            <SmallButton icon="brush">格式刷</SmallButton>
          </SmallCol>
        </RibbonGroup>
        <RibbonGroup w={199} name="字体" launcher>
          <Tools>
            <ToolRow>
              <Combo $w={119}><select aria-label="字体"><option>等线</option></select><Caret w={6} /></Combo>
              <Combo $w={62}><select aria-label="字号"><option>11</option></select><Caret w={6} /></Combo>
            </ToolRow>
            <ToolRow>
              <Tool $on><b>B</b></Tool>
              <Tool><b><i>I</i></b></Tool>
              <Tool><b><u>U</u></b></Tool>
              <Rule $soft $m="0 4px" />
              <Tool aria-label="背景色">{I.bucket}</Tool>
              <ToolCaret aria-label="背景色选项"><Caret w={6} /></ToolCaret>
              <Tool aria-label="字体颜色">{I.fontA}</Tool>
              <ToolCaret aria-label="字体颜色选项"><Caret w={6} /></ToolCaret>
            </ToolRow>
          </Tools>
        </RibbonGroup>
        <RibbonGroup w={305} name="日程">
          <Tools $w={156}>
            <ToolRow>
              {[0, 25, 50, 75, 100].map((n) => (
                <Tool key={n} $pct>
                  <S w={18} h={9}><path d="M0 0h18v9H0z" fill={c.blue} /><path d={`M1 4.500h${(n * 16) / 100}`} stroke="#12233f" strokeWidth="2" /></S>
                  {n}%
                </Tool>
              ))}
            </ToolRow>
            <ToolRow>
              <Tool aria-label="降级">{I.outdent}</Tool>
              <Tool aria-label="升级">{I.indent}</Tool>
              <Rule $soft $m="0 4px" />
              <Tool aria-label="拆分任务">{I.split}</Tool>
              <Rule $soft $m="0 4px" />
              <Tool aria-label="链接任务">{I.link}</Tool>
              <Tool aria-label="取消链接">{I.unlink}</Tool>
            </ToolRow>
          </Tools>
          <SmallCol>
            <SmallButton icon="mark" caret="far">跟踪时标记</SmallButton>
            <SmallButton icon="respect">考虑链接</SmallButton>
            <SmallButton icon="inactive">停用</SmallButton>
          </SmallCol>
        </RibbonGroup>
        <RibbonGroup w={316} pad={9} name="任务">
          <BigButton icon="pin" w={66}>手动安排</BigButton>
          <BigButton icon="auto" w={65} on>自动安排</BigButton>
          <Rule $soft $m="9px 5px" />
          <BigButton icon="check" w={52} caret>检查</BigButton>
          <BigButton icon="move" w={52} caret>移动</BigButton>
          <BigButton icon="mode" w={52} caret>模式</BigButton>
        </RibbonGroup>
        <RibbonGroup w={255} name="插入">
          <BigButton icon="task" w={52} caret>任务</BigButton>
          <BigButton icon="summary" w={52}>摘要</BigButton>
          <BigButton icon="milestone" w={52}>里程碑</BigButton>
          <BigButton icon="deliver" w={80} off caret>可交付结果</BigButton>
        </RibbonGroup>
        <RibbonGroup w={198} name="属性">
          <BigButton icon="info" w={50}>信息</BigButton>
          <SmallCol>
            <SmallButton icon="note">备注</SmallButton>
            <SmallButton icon="detail">详细信息</SmallButton>
            <SmallButton icon="addTl">添加到日程表</SmallButton>
          </SmallCol>
        </RibbonGroup>
        <RibbonGroup w={154} name="编辑">
          <BigButton icon="scrollTo" w={50}>滚动到<br />任务</BigButton>
          <SmallCol>
            <SmallButton icon="find" caret="far">查找</SmallButton>
            <SmallButton icon="erase" caret="near">清除</SmallButton>
            <SmallButton icon="fill" caret="near">填充</SmallButton>
          </SmallCol>
        </RibbonGroup>
      </Ribbon>

      <Timeline>
        <TimelineEnd $w={76} $start><span>开始时间</span><span>2020年9月28日</span></TimelineEnd>
        <TimelineMain>
          <Ticks>
            {["", "10月5日", "10月12日", "10月19日", "10月26日", "11月2日", "11月9日", "11月16日", "11月23日", "11月30日"].map((d) => (
              <Tick key={d}>{d && `2020年${d}`}</Tick>
            ))}
          </Ticks>
          <Track>将带有日期的任务添加到日程表</Track>
        </TimelineMain>
        <TimelineEnd $w={42}><span>完成时间</span><span>2020年12月4日</span></TimelineEnd>
        <Today>今天</Today>
        <Busy />
      </Timeline>
      <HSplit />

      <Panes>
        <Pane>
          <Clip>
            <Sheet>
              <colgroup>{cols.map((w, i) => <col key={i} style={{ width: w }} />)}</colgroup>
              <thead>
                <tr>
                  <Th $corner aria-label="标记"><ThBody><InfoMark>{I.i}</InfoMark></ThBody></Th>
                  {["任务模式", "任务名称", "工期", "开始时间", "完成时间", "前置任务"].map((t, i) => (
                    <Th key={t}><ThBody $edge={i === 5}><span>{t}</span><Caret w={10} /></ThBody></Th>
                  ))}
                </tr>
              </thead>
              <tbody>
                {tasks.map(([level, name, dur, start, end, pred, bold], i) => (
                  <Row key={i} $bold={bold} $selected={i === 0}>
                    <Td />
                    <Td><ModeCell>{I.row}</ModeCell></Td>
                    <Td $wide={!bold}><NameCell $level={level}><Fold>{bold && I.fold}</Fold>{name}</NameCell></Td>
                    <Td $wide={!bold}>{dur}</Td>
                    <Td><Clipped>{start}</Clipped></Td>
                    <Td>{end}</Td>
                    <Td>{pred}</Td>
                  </Row>
                ))}
                {Array.from({ length: 14 }, (_, i) => (
                  <Row key={"e" + i}>{cols.map((_, j) => <Td key={j} />)}</Row>
                ))}
              </tbody>
            </Sheet>
          </Clip>
          <ScrollBar><Thumb $w="553px" $flush /><Arrow aria-label="向右滚动">{I.right}</Arrow></ScrollBar>
        </Pane>
        <VSplit />
        <Pane>
          <Scale>
            <ScaleRow $h={19} $gap>{months.map(([t, w]) => <Month key={t} $w={w}>{t}</Month>)}</ScaleRow>
            <ScaleRow $h={17}>{weeks.map((n, i) => <Week key={i}>{n}</Week>)}</ScaleRow>
          </Scale>
          <Clip><Gantt /></Clip>
          <ScrollBar $right><Arrow aria-label="向左滚动">{I.left}</Arrow><Thumb $w="385px" /></ScrollBar>
        </Pane>
      </Panes>

      <Status>
        <StatusText><S w={4} h={6}><path d="M0 1l3 2-3 2" fill="#555" /></S>新任务: 手动计划</StatusText>
        {["vGantt", "vUsage", "vTeam", "vSheet", "vReport"].map((v, i) => (
          <ViewButton key={v} $on={i === 0} aria-label={["甘特图", "任务分配状况", "工作组规划器", "资源工作表", "报表"][i]}>{I[v]}</ViewButton>
        ))}
        <ZoomBox>
          <button aria-label="缩小"><S w={10} h={3}><path d="M0 0h10v3H0z" fill="#666" /></S></button>
          <input type="range" aria-label="缩放" defaultValue="60" />
        </ZoomBox>
      </Status>

      <Taskbar>
        <Search placeholder="在这里输入你要搜索的内容" aria-label="搜索" />
        <TaskButton aria-label="Cortana">{I.cortana}</TaskButton>
        <TaskButton aria-label="任务视图">{I.taskview}</TaskButton>
        <TaskButton aria-label="文件资源管理器">{I.explorer}</TaskButton>
        <TaskButton aria-label="邮件">{I.mail}</TaskButton>
        <TaskButton $run aria-label="Chrome">{I.chrome}</TaskButton>
        <TaskButton aria-label="待办">{I.todo}<Badge>3</Badge></TaskButton>
        <TaskButton aria-label="TeX"><TexIcon /></TaskButton>
        <TaskButton $on aria-label="Project"><ProjectIcon /></TaskButton>
        <Tray>
          <TrayButton aria-label="显示隐藏的图标">{I.chevron}</TrayButton>
          <TrayButton aria-label="OneDrive">{I.cloud}</TrayButton>
          <TrayButton aria-label="麦克风">{I.mic}</TrayButton>
          <TrayButton aria-label="电池">{I.battery}</TrayButton>
          <TrayButton aria-label="音量">{I.sound}</TrayButton>
          <TrayButton $w={36} aria-label="笔">{I.pen}</TrayButton>
          <TrayButton $w={34}>中</TrayButton>
          <TrayButton $w={38}><Ime>拼</Ime></TrayButton>
          <Clock>12:58<br />2020/9/28</Clock>
        </Tray>
      </Taskbar>
      <Timer>01:56</Timer>
    </Shell>
  );
}
